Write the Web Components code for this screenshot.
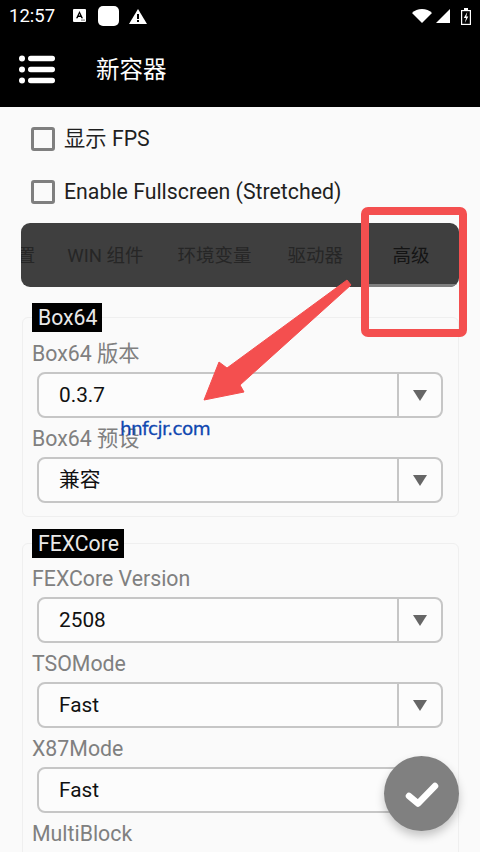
<!DOCTYPE html>
<html><head><meta charset="utf-8"><style>
html,body{margin:0;padding:0;background:#fafafa}
body{width:480px;height:852px;overflow:hidden;font-family:Roboto,"Noto Sans CJK SC",sans-serif}
</style></head><body>
<x-app>
<x-header title="新容器"></x-header>
<x-check>显示 FPS</x-check>
<x-check>Enable Fullscreen (Stretched)</x-check>
<x-tabs></x-tabs>
<x-group legend="Box64" style="--h:15px">
<x-select label="Box64 版本">0.3.7</x-select>
<x-select label="Box64 预设">兼容</x-select>
</x-group>
<x-group legend="FEXCore" style="--gap:26px;--h:14px">
<x-select label="FEXCore Version">2508</x-select>
<x-select label="TSOMode">Fast</x-select>
<x-select label="X87Mode">Fast</x-select>
<x-select label="MultiBlock"></x-select>
</x-group>
</x-app>
<x-overlays></x-overlays>
<script>
function def(name, css, html){
  customElements.define(name, class extends HTMLElement{
    connectedCallback(){
      if(this.shadowRoot) return;
      const r=this.attachShadow({mode:'open'});
      r.innerHTML='<style>'+css+'</style>'+(typeof html==='function'?html(this):html);
    }
  });
}
def('x-app',':host{display:flex;flex-direction:column;width:480px;height:852px;overflow:hidden;background:#fafafa}','<slot></slot>');
def('x-header',`
:host{display:block;background:#000;color:#fff;height:107px;flex:none}
.status{height:32px;display:flex;align-items:center;padding:0 9px 0 9px;font-size:18.500px;line-height:22px}
.time{width:64px}
.l{display:flex;align-items:center;flex:1}
.r{display:flex;align-items:center}
svg{display:block}
.bar{height:75px;display:flex;align-items:center;padding-left:19px}
.t{font-size:23.500px;line-height:30px;margin-left:40px}
`,h=>`<div class="status"><span class="time">12:57</span><div class="l">
<svg width="13" height="13" viewBox="0 0 13 13" style="margin-right:12px;margin-top:-1px"><rect width="13" height="13" rx="1" fill="#fff"/><path d="M3 9.200 6.500 2l3.500 7.200H8.300L7.800 8H5.200l-.5 1.200zM5.800 6.500h1.400L6.500 4.800z" fill="#000"/><rect x="8" y="10.500" width="4" height="1.200" fill="#888"/></svg>
<svg width="21" height="20" viewBox="0 0 21 20" style="margin-right:10px"><rect width="21" height="20" rx="5" fill="#fff"/></svg>
<svg width="18" height="15" viewBox="0 0 18 15"><path d="M9 0 18 15H0z" fill="#fff"/><rect x="8" y="5" width="2" height="5" fill="#000"/><rect x="8" y="11" width="2" height="2" fill="#000"/></svg>
</div><div class="r">
<svg width="20" height="14" viewBox="0 0 20 14" style="margin-right:4px"><path d="M0 4C5-1.300 15-1.300 20 4L10 14z" fill="#fff"/></svg>
<svg width="14" height="14" viewBox="0 0 14 14" style="margin-right:11px"><path d="M14 0V14H0z" fill="#fff"/></svg>
<svg width="10" height="17" viewBox="0 0 10 17"><path d="M3 0H7V2H10V17H0V2H3z" fill="#fff"/><rect x="1.200" y="3.200" width="7.600" height="12.600" fill="#000"/><path d="M6.300 4 2.800 10H5L3.800 15 7.300 8.500H5.300z" fill="#fff"/></svg>
</div></div>
<div class="bar"><svg width="37" height="30" viewBox="0 0 37 30"><g fill="#fff"><circle cx="3" cy="3.500" r="3"/><circle cx="3" cy="14.500" r="3"/><circle cx="3" cy="25.500" r="3"/><rect x="9" y="0.800" width="27" height="5.500" rx="2.700"/><rect x="9" y="11.800" width="27" height="5.500" rx="2.700"/><rect x="9" y="22.800" width="27" height="5.500" rx="2.700"/></g></svg><span class="t">${h.getAttribute('title')}</span></div>`);
def('x-check',`
:host{display:flex;align-items:center;height:53px;padding-left:31px;font-size:21.300px;line-height:26px;color:#1f1f1f;flex:none}
:host(:first-of-type){margin-top:5px}
.b{width:18px;height:18px;border:3px solid #7f7f7f;border-radius:3px;margin-right:9px;flex:none}
`,'<span class="b"></span><span><slot></slot></span>');
def('x-tabs',`
:host{display:flex;justify-content:flex-end;margin:5px 21px 0;height:64px;background:#3f3f3f;border-radius:9px;overflow:hidden;flex:none;position:relative;font-size:18.500px;line-height:24px;color:#262626}
.t{flex:none;display:flex;align-items:center;justify-content:center;height:64px;box-sizing:border-box;padding:2px 17px 0;white-space:nowrap}
.a{width:96px;padding:2px 0 0;color:#141414;position:relative}
.a::after{content:"";position:absolute;left:6px;right:0;bottom:0;height:3px;background:#7f7f7f}
`,'<div class="t">基本设置</div><div class="t" style="padding-left:15px">WIN 组件</div><div class="t">环境变量</div><div class="t" style="padding-right:20px;padding-left:19px">驱动器</div><div class="t a">高级</div>');
def('x-group',`
:host{display:block;flex:none;margin:var(--gap,30px) 21px 0 22px;border:1px solid #efefef;border-radius:6px;padding:0 15px 13px 9px;}
.lg{display:inline-block;background:#000;color:#e8e8e8;font-size:21.200px;line-height:29px;height:29px;padding:0 5px 0 6px;margin-top:-15px;vertical-align:top}
.h{height:var(--h,14px)}
`,h=>`<div class="h"><span class="lg">${h.getAttribute('legend')}</span></div><slot></slot>`);
def('x-select',`
:host{display:block}
.lb{height:39px;line-height:41px;font-size:21.300px;color:#808080;white-space:nowrap}
.s{display:flex;height:42px;margin-left:5px;border:2px solid #c6c6c6;border-radius:8px;background:#fcfcfc;font-size:20.800px;line-height:26px;color:#111;align-items:center}
.v{flex:1;padding-left:20px}
.ar{width:42px;height:100%;border-left:2px solid #c6c6c6;display:flex;align-items:center;justify-content:center}
.tr{width:0;height:0;border-left:7.500px solid transparent;border-right:7.500px solid transparent;border-top:11px solid #666}
`,h=>`<div class="lb">${h.getAttribute('label')}</div><div class="s"><span class="v"><slot></slot></span><span class="ar"><span class="tr"></span></span></div>`);
def('x-overlays',`
:host{display:block}
.rect{position:absolute;left:361px;top:207px;width:90px;height:114px;border:8px solid #f44f4f;border-radius:7px}
svg{position:absolute;left:0;top:0}
.wm{position:absolute;left:120px;top:418px;font-size:18.400px;line-height:22px;color:#0f47b0;font-family:"DejaVu Sans",sans-serif;font-weight:400;-webkit-text-stroke:.3px #0f47b0;letter-spacing:-.6px}
.fab{position:absolute;left:384px;top:756px;width:75px;height:75px;border-radius:50%;background:#808080;box-shadow:0 5px 10px rgba(0,0,0,.22);display:flex;align-items:center;justify-content:center}
`,`<div class="rect"></div>
<svg width="480" height="852"><path d="M347 280 351 285 240 385 244 392 204 400 219 362 227 368z" fill="#f44f4f" stroke="#f44f4f" stroke-width="1" stroke-linejoin="round"/></svg>
<div class="wm">hnfcjr.com</div>
<div class="fab"><svg style="position:static" width="34" height="26" viewBox="0 0 34 26"><path d="M4 15 13 22.500 30 5" fill="none" stroke="#fff" stroke-width="6.500" stroke-linecap="round" stroke-linejoin="round"/></svg></div>`);
</script></body></html>
